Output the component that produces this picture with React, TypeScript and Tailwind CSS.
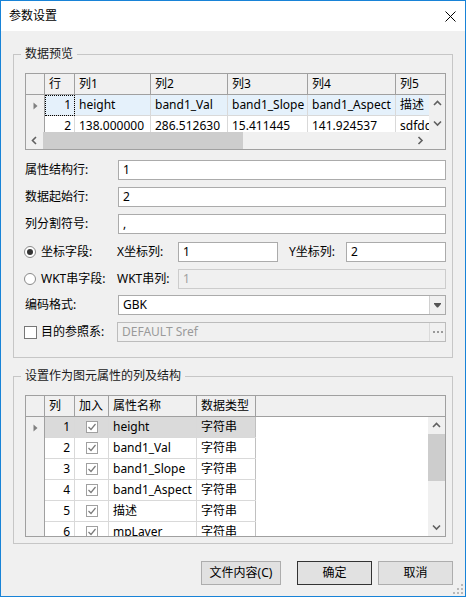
import { ReactNode } from "react";

const FONT = "font-['Noto_Sans','Noto_Sans_CJK_SC',sans-serif]";

function Chevron({ dir }: { dir: "up" | "down" | "left" | "right" }) {
  const paths = {
    up: "M1 5 L4.5 1.5 L8 5",
    down: "M1 1.5 L4.5 5 L8 1.5",
    left: "M5 1 L1.5 4.5 L5 8",
    right: "M1.5 1 L5 4.5 L1.5 8",
  };
  const vertical = dir === "up" || dir === "down";
  return (
    <svg width={vertical ? 9 : 7} height={vertical ? 7 : 9} viewBox={vertical ? "0 0 9 7" : "0 0 7 9"}>
      <path d={paths[dir]} fill="none" stroke="#606060" strokeWidth="1.6" />
    </svg>
  );
}

function RowMark() {
  return (
    <svg width="5" height="8" viewBox="0 0 5 8">
      <path d="M0.5 0.5 L4.5 4 L0.5 7.5 Z" fill="#808080" />
    </svg>
  );
}

function CellCheck() {
  return (
    <span className="w-[12px] h-[12px] border border-[#a0a0a0] bg-white flex items-center justify-center">
      <svg width="10" height="10" viewBox="0 0 10 10">
        <path d="M1.5 5 L4 7.5 L8.5 2" fill="none" stroke="#7a7a7a" strokeWidth="1.2" />
      </svg>
    </span>
  );
}

function GroupBox({ title, className, children }: { title: string; className: string; children: ReactNode }) {
  return (
    <div className={`relative border border-[#c6c6c6] pt-[18px] pl-[11px] pr-[6px] ${className}`}>
      <span className="absolute top-[-9px] left-[7px] px-[4px] bg-[#f0f0f0] leading-[16px] text-[#1a1a1a]">
        {title}
      </span>
      {children}
    </div>
  );
}

function TextBox({ value, className = "" }: { value: string; className?: string }) {
  return (
    <div className={`h-[20px] border border-[#ababab] bg-white pl-[4px] leading-[18px] ${className}`}>{value}</div>
  );
}

function Label({ children, className = "w-[93px]" }: { children: ReactNode; className?: string }) {
  return <span className={`shrink-0 leading-[16px] ${className}`}>{children}</span>;
}

const previewRows = [
  ["1", "height", "band1_Val", "band1_Slope", "band1_Aspect", "描述"],
  ["2", "138.000000", "286.512630", "15.411445", "141.924537", "sdfdd"],
];

const fieldRows = [
  ["1", "height"],
  ["2", "band1_Val"],
  ["3", "band1_Slope"],
  ["4", "band1_Aspect"],
  ["5", "描述"],
  ["6", "mpLayer"],
];

function PreviewGrid() {
  return (
    <div className="h-[77px] border border-[#a0a0a0] bg-white flex flex-col overflow-hidden">
      <div className="h-[21px] shrink-0 flex border-b border-[#a0a0a0] bg-[#f0f0f0] leading-[20px]">
        <div className="w-[19px] shrink-0 border-r border-[#a0a0a0]" />
        <div className="w-[30px] shrink-0 border-r border-[#a0a0a0] pl-[4px]">行</div>
        <div className="w-[76px] shrink-0 border-r border-[#a0a0a0] pl-[4px]">列1</div>
        <div className="w-[77px] shrink-0 border-r border-[#a0a0a0] pl-[4px]">列2</div>
        <div className="w-[80px] shrink-0 border-r border-[#a0a0a0] pl-[4px]">列3</div>
        <div className="w-[88px] shrink-0 border-r border-[#a0a0a0] pl-[4px]">列4</div>
        <div className="flex-1 pl-[4px]">列5</div>
      </div>
      <div className="h-[37px] shrink-0 flex">
        <div className="flex-1 overflow-hidden">
          {previewRows.map((r, i) => (
            <div
              key={r[0]}
              className={`h-[21px] flex leading-[20px] whitespace-nowrap ${i === 0 ? "bg-[#e5f1fb]" : "bg-white"}`}
            >
              <div className="w-[19px] shrink-0 border-r border-[#a0a0a0] bg-[#f0f0f0] flex items-center justify-center">
                {i === 0 && <RowMark />}
              </div>
              <div
                className={`w-[30px] shrink-0 border-r border-b border-[#d9d9d9] text-right pr-[3px] ${
                  i === 0 ? "outline outline-1 outline-dotted outline-black -outline-offset-1" : ""
                }`}
              >
                {r[0]}
              </div>
              <div className="w-[76px] shrink-0 border-r border-b border-[#d9d9d9] pl-[4px] overflow-hidden">{r[1]}</div>
              <div className="w-[77px] shrink-0 border-r border-b border-[#d9d9d9] pl-[4px] overflow-hidden">{r[2]}</div>
              <div className="w-[80px] shrink-0 border-r border-b border-[#d9d9d9] pl-[4px] overflow-hidden">{r[3]}</div>
              <div className="w-[88px] shrink-0 border-r border-b border-[#d9d9d9] pl-[4px] overflow-hidden">{r[4]}</div>
              <div className="w-[50px] shrink-0 border-b border-[#d9d9d9] pl-[4px]">{r[5]}</div>
            </div>
          ))}
        </div>
        <div className="w-[16px] shrink-0 bg-[#f0f0f0] flex flex-col items-center justify-between py-[5px]">
          <Chevron dir="up" />
          <Chevron dir="down" />
        </div>
      </div>
      <div className="h-[17px] shrink-0 flex bg-[#f0f0f0]">
        <div className="w-[17px] flex items-center justify-center">
          <Chevron dir="left" />
        </div>
        <div className="w-[200px] bg-[#cdcdcd]" />
        <div className="flex-1" />
        <div className="w-[17px] flex items-center justify-center">
          <Chevron dir="right" />
        </div>
        <div className="w-[16px]" />
      </div>
    </div>
  );
}

function FieldGrid() {
  return (
    <div className="h-[142px] border border-[#a0a0a0] bg-white flex flex-col overflow-hidden">
      <div className="h-[21px] shrink-0 flex border-b border-[#a0a0a0] bg-[#f0f0f0] leading-[20px]">
        <div className="w-[19px] shrink-0 border-r border-[#a0a0a0]" />
        <div className="w-[30px] shrink-0 border-r border-[#a0a0a0] pl-[4px]">列</div>
        <div className="w-[34px] shrink-0 border-r border-[#a0a0a0] pl-[4px]">加入</div>
        <div className="w-[88px] shrink-0 border-r border-[#a0a0a0] pl-[4px]">属性名称</div>
        <div className="w-[59px] shrink-0 border-r border-[#a0a0a0] pl-[4px]">数据类型</div>
        <div className="flex-1" />
      </div>
      <div className="flex-1 flex min-h-0">
        <div className="flex-1 overflow-hidden">
          {fieldRows.map((r, i) => (
            <div key={r[0]} className="h-[21px] flex leading-[20px] whitespace-nowrap">
              <div className="w-[19px] shrink-0 border-r border-[#a0a0a0] bg-[#f0f0f0] flex items-center justify-center">
                {i === 0 && <RowMark />}
              </div>
              <div className={`flex border-b border-[#d9d9d9] ${i === 0 ? "bg-[#dadada]" : "bg-white"}`}>
                <div className="w-[30px] shrink-0 border-r border-[#d9d9d9] text-right pr-[4px]">{r[0]}</div>
                <div className="w-[34px] shrink-0 border-r border-[#d9d9d9] flex items-center justify-center">
                  <CellCheck />
                </div>
                <div className="w-[88px] shrink-0 border-r border-[#d9d9d9] pl-[4px]">{r[1]}</div>
                <div className="w-[59px] shrink-0 border-r border-[#c0c0c0] pl-[4px]">字符串</div>
              </div>
            </div>
          ))}
        </div>
        <div className="w-[17px] shrink-0 bg-[#f0f0f0] flex flex-col">
          <div className="h-[17px] flex items-center justify-center">
            <Chevron dir="up" />
          </div>
          <div className="h-[47px] bg-[#cdcdcd]" />
          <div className="flex-1" />
          <div className="h-[17px] flex items-center justify-center">
            <Chevron dir="down" />
          </div>
        </div>
      </div>
    </div>
  );
}

function Radio({ checked }: { checked?: boolean }) {
  return (
    <span className="w-[12px] h-[12px] rounded-full border border-[#8a8a8a] bg-white flex items-center justify-center mr-[5px]">
      {checked && <span className="w-[6px] h-[6px] rounded-full bg-[#333333]" />}
    </span>
  );
}

function Button({ children, className }: { children: ReactNode; className: string }) {
  return (
    <button className={`h-[24px] border bg-[#e1e1e1] leading-[16px] ${className}`}>{children}</button>
  );
}

export default function App() {
  return (
    <div className={`relative w-[466px] h-[597px] border border-[#1883d7] bg-[#f0f0f0] flex flex-col text-[12px] text-black ${FONT}`}>
      <div className="h-[30px] shrink-0 bg-white flex items-center justify-between pl-[8px] pr-[9px]">
        <span className="leading-[16px]">参数设置</span>
        <svg width="11" height="11" viewBox="0 0 11 11">
          <path d="M0.5 0.5 L10.5 10.5 M10.5 0.5 L0.5 10.5" stroke="#000" strokeWidth="1" />
        </svg>
      </div>

      <div className="flex-1 flex flex-col px-[12px] pt-[23px]">
        <GroupBox title="数据预览" className="h-[304px]">
          <PreviewGrid />
          <div className="mt-[10px] flex flex-col gap-[7px]">
            <div className="flex items-center">
              <Label>属性结构行:</Label>
              <TextBox value="1" className="flex-1" />
            </div>
            <div className="flex items-center">
              <Label>数据起始行:</Label>
              <TextBox value="2" className="flex-1" />
            </div>
            <div className="flex items-center">
              <Label>列分割符号:</Label>
              <TextBox value="," className="flex-1" />
            </div>
            <div className="flex items-center mt-[1px]">
              <span className="w-[93px] shrink-0 flex items-center -ml-[1px] pl-[0px]">
                <Radio checked />
                <span className="leading-[16px]">坐标字段:</span>
              </span>
              <Label className="w-[61px]">X坐标列:</Label>
              <TextBox value="1" className="w-[100px]" />
              <Label className="w-[57px] ml-[11px]">Y坐标列:</Label>
              <TextBox value="2" className="flex-1" />
            </div>
            <div className="flex items-center">
              <span className="w-[93px] shrink-0 flex items-center -ml-[1px]">
                <Radio />
                <span className="leading-[16px]">WKT串字段:</span>
              </span>
              <Label className="w-[61px]">WKT串列:</Label>
              <div className="flex-1 h-[20px] border border-[#cccccc] bg-[#f0f0f0] pl-[4px] leading-[18px] text-[#a0a0a0]">
                1
              </div>
            </div>
            <div className="flex items-center -mt-[1px]">
              <Label>编码格式:</Label>
              <div className="flex-1 h-[20px] border border-[#ababab] bg-white flex">
                <span className="flex-1 pl-[4px] leading-[18px]">GBK</span>
                <span className="w-[16px] border-l border-[#d0d0d0] bg-[#f0f0f0] flex items-center justify-center">
                  <svg width="7" height="5" viewBox="0 0 7 5">
                    <path d="M0 0 H7 V1 L4 4.5 H3 L0 1 Z" fill="#555555" />
                  </svg>
                </span>
              </div>
            </div>
            <div className="flex items-center">
              <span className="w-[93px] shrink-0 flex items-center -ml-[1px]">
                <span className="w-[13px] h-[13px] border border-[#767676] bg-white mr-[4px]" />
                <span className="leading-[16px]">目的参照系:</span>
              </span>
              <div className="flex-1 h-[20px] border border-[#bcbcbc] bg-[#f0f0f0] flex">
                <span className="flex-1 pl-[4px] leading-[18px] text-[#9a9a9a]">DEFAULT Sref</span>
                <span className="w-[16px] border-l border-[#dadada] flex items-center justify-center gap-[2px]">
                  <span className="w-[2px] h-[2px] bg-[#9a9a9a]" />
                  <span className="w-[2px] h-[2px] bg-[#9a9a9a]" />
                  <span className="w-[2px] h-[2px] bg-[#9a9a9a]" />
                </span>
              </div>
            </div>
          </div>
        </GroupBox>

        <GroupBox title="设置作为图元属性的列及结构" className="h-[168px] mt-[18px]">
          <FieldGrid />
        </GroupBox>

        <div className="mt-[17px] flex justify-end">
          <Button className="w-[80px] border-[#adadad] mr-[16px]">文件内容(C)</Button>
          <Button className="w-[75px] border-[#333333] mr-[6px]">确定</Button>
          <Button className="w-[75px] border-[#adadad]">取消</Button>
        </div>
      </div>

      <svg className="absolute right-[2px] bottom-[2px]" width="10" height="10" viewBox="0 0 10 10">
        <rect x="8" y="0" width="2" height="2" fill="#b8b8b8" />
        <rect x="4" y="4" width="2" height="2" fill="#b8b8b8" />
        <rect x="8" y="4" width="2" height="2" fill="#b8b8b8" />
        <rect x="0" y="8" width="2" height="2" fill="#b8b8b8" />
        <rect x="4" y="8" width="2" height="2" fill="#b8b8b8" />
        <rect x="8" y="8" width="2" height="2" fill="#b8b8b8" />
      </svg>
    </div>
  );
}
